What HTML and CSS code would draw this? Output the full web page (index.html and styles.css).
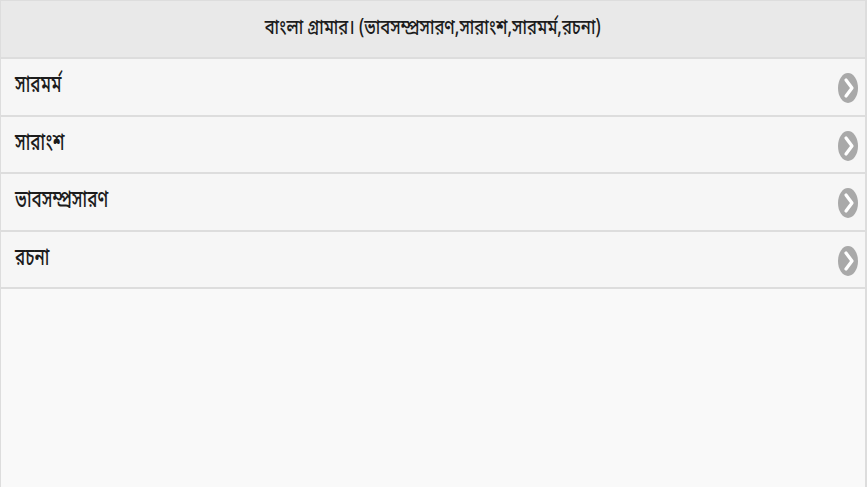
FILE: index.html
```html
<!DOCTYPE html>
<html lang="bn">
<head>
<meta charset="utf-8">
<title>বাংলা গ্রামার</title>
<link rel="stylesheet" href="styles.css">
</head>
<body>
<div class="page">
  <header class="header"><span class="title">বাংলা গ্রামার। (ভাবসম্প্রসারণ,সারাংশ,সারমর্ম,রচনা)</span></header>
  <ul class="list">
    <li class="row"><span class="label">সারমর্ম</span><span class="arrow"><svg viewBox="0 0 20 30" width="20" height="30"><path d="M8 7l6 8-6 8" fill="none" stroke="#fff" stroke-width="3.2" stroke-linecap="round" stroke-linejoin="round"/></svg></span></li>
    <li class="row"><span class="label">সারাংশ</span><span class="arrow"><svg viewBox="0 0 20 30" width="20" height="30"><path d="M8 7l6 8-6 8" fill="none" stroke="#fff" stroke-width="3.2" stroke-linecap="round" stroke-linejoin="round"/></svg></span></li>
    <li class="row"><span class="label">ভাবসম্প্রসারণ</span><span class="arrow"><svg viewBox="0 0 20 30" width="20" height="30"><path d="M8 7l6 8-6 8" fill="none" stroke="#fff" stroke-width="3.2" stroke-linecap="round" stroke-linejoin="round"/></svg></span></li>
    <li class="row"><span class="label">রচনা</span><span class="arrow"><svg viewBox="0 0 20 30" width="20" height="30"><path d="M8 7l6 8-6 8" fill="none" stroke="#fff" stroke-width="3.2" stroke-linecap="round" stroke-linejoin="round"/></svg></span></li>
  </ul>
</div>
</body>
</html>
```
FILE: styles.css
```css
html, body {
  margin: 0;
  padding: 0;
  height: 100%;
}
body {
  font-family: "Noto Sans Bengali", "Noto Sans", "Liberation Sans", "DejaVu Sans", sans-serif;
  color: #1c1c1c;
  background: #f9f9f9;
}
.page {
  height: 487px;
  box-sizing: border-box;
  border-left: 1px solid #ddd;
  border-right: 2px solid #ddd;
  overflow: hidden;
}
.header {
  height: 56px;
  border-top: 1px solid #ddd;
  border-bottom: 2px solid #ddd;
  background: #e9e9e9;
  display: flex;
  align-items: center;
  justify-content: center;
  font-size: 21px;
  font-weight: 500;
}
.title {
  display: inline-block;
  white-space: nowrap;
  transform: scaleX(0.79);
}
.list {
  list-style: none;
  margin: 0;
  padding: 0;
}
.row {
  height: 52.5px;
  border-bottom: 2px solid #ddd;
  background: #f6f6f6;
  display: flex;
  align-items: center;
  justify-content: space-between;
  padding: 3px 7px 0 14px;
  font-size: 24px;
  font-weight: 500;
}
.label {
  display: inline-block;
  white-space: nowrap;
  transform: translateY(-2px) scaleX(0.71);
  transform-origin: left center;
}
.arrow {
  width: 20px;
  height: 30px;
  border-radius: 50%;
  background: #a9a9a9;
  display: flex;
}
```
